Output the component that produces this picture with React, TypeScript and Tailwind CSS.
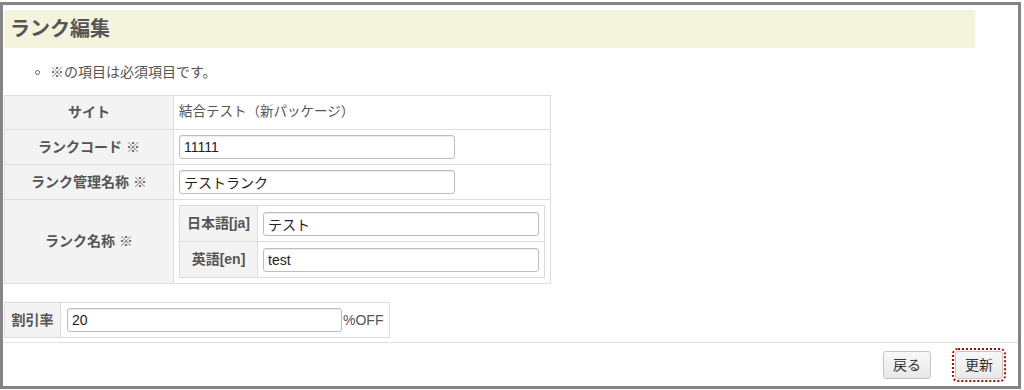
const font = { fontFamily: '"Liberation Sans", "Noto Sans CJK JP", sans-serif' };

function TextInput({ value, width }: { value: string; width: string }) {
  return (
    <input
      readOnly
      value={value}
      className={`${width} h-[24px] rounded-[3px] border border-[#bdbdbd] bg-white px-[4px] text-[14px] text-[#222] shadow-[inset_0_1px_1px_rgba(0,0,0,0.08)] outline-none`}
    />
  );
}

export default function App() {
  return (
    <div className="h-[390px] w-[1024px] overflow-hidden bg-white pt-[2px] text-[#555]" style={font}>
      <div className="flex h-[387px] w-[1021px] flex-col border-[3px] border-[#858585] pl-[1px]">
        {/* heading */}
        <div className="mt-[5px] flex h-[38px] w-[971px] items-center bg-[#f4f4dc] pl-[6px]">
          <h1 className="text-[20px] font-bold text-[#555]">ランク編集</h1>
        </div>

        {/* notice */}
        <div className="mt-[14px] flex h-[20px] items-center pl-[31px] text-[14px]">
          <span className="mr-[10px] h-[5px] w-[5px] rounded-full border border-[#666]" />
          <span>※の項目は必須項目です。</span>
        </div>

        {/* main table */}
        <div className="mt-[13px] w-[547px] border-x border-t border-[#dddddd] text-[13px]">
          <div className="flex h-[34px] border-b border-[#dddddd]">
            <div className="flex w-[169px] items-center justify-center border-r border-[#dddddd] bg-[#f3f3f3] text-[14px] font-bold">
              サイト
            </div>
            <div className="flex items-center pl-[5px] text-[13.5px]">結合テスト（新パッケージ）</div>
          </div>
          <div className="flex h-[35px] border-b border-[#dddddd]">
            <div className="flex w-[169px] items-center justify-center border-r border-[#dddddd] bg-[#f3f3f3] text-[14px] font-bold">
              ランクコード ※
            </div>
            <div className="flex items-center pl-[5px]">
              <TextInput value="11111" width="w-[276px]" />
            </div>
          </div>
          <div className="flex h-[35px] border-b border-[#dddddd]">
            <div className="flex w-[169px] items-center justify-center border-r border-[#dddddd] bg-[#f3f3f3] text-[14px] font-bold">
              ランク管理名称 ※
            </div>
            <div className="flex items-center pl-[5px]">
              <TextInput value="テストランク" width="w-[276px]" />
            </div>
          </div>
          <div className="flex h-[84px] border-b border-[#dddddd]">
            <div className="flex w-[169px] items-center justify-center border-r border-[#dddddd] bg-[#f3f3f3] text-[14px] font-bold">
              ランク名称 ※
            </div>
            <div className="pl-[5px] pt-[5px]">
              <div className="w-[366px] border-x border-t border-[#dddddd]">
                <div className="flex h-[36px] border-b border-[#dddddd]">
                  <div className="flex w-[78px] items-center justify-center border-r border-[#dddddd] bg-[#f3f3f3] text-[14px] font-bold">
                    日本語[ja]
                  </div>
                  <div className="flex items-center pl-[5px]">
                    <TextInput value="テスト" width="w-[276px]" />
                  </div>
                </div>
                <div className="flex h-[36px] border-b border-[#dddddd]">
                  <div className="flex w-[78px] items-center justify-center border-r border-[#dddddd] bg-[#f3f3f3] text-[14px] font-bold">
                    英語[en]
                  </div>
                  <div className="flex items-center pl-[5px]">
                    <TextInput value="test" width="w-[276px]" />
                  </div>
                </div>
              </div>
            </div>
          </div>
        </div>

        {/* discount */}
        <div className="mt-[18px] flex h-[36px] w-[386px] border border-[#dddddd]">
          <div className="flex w-[56px] items-center justify-center border-r border-[#dddddd] bg-[#f3f3f3] text-[14px] font-bold">
            割引率
          </div>
          <div className="flex items-center pl-[6px] text-[14px]">
            <TextInput value="20" width="w-[275px]" />
            <span className="ml-[1px]">%OFF</span>
          </div>
        </div>

        {/* footer */}
        <div className="mt-[4px] flex flex-1 items-start justify-end gap-[24px] border-t border-[#e2e2e2] pr-[15px] pt-[8px]">
          <button className="h-[28px] rounded-[3px] border border-[#c4c4c4] bg-gradient-to-b from-[#f8f8f8] to-[#e8e8e8] px-[9px] text-[14px] text-[#333]">
            戻る
          </button>
          <button className="h-[28px] rounded-[3px] border border-[#c4c4c4] bg-gradient-to-b from-[#f8f8f8] to-[#e8e8e8] px-[9px] text-[14px] text-[#333] outline-2 outline-offset-[1px] outline-dotted outline-[#c00000]">
            更新
          </button>
        </div>
      </div>
    </div>
  );
}
